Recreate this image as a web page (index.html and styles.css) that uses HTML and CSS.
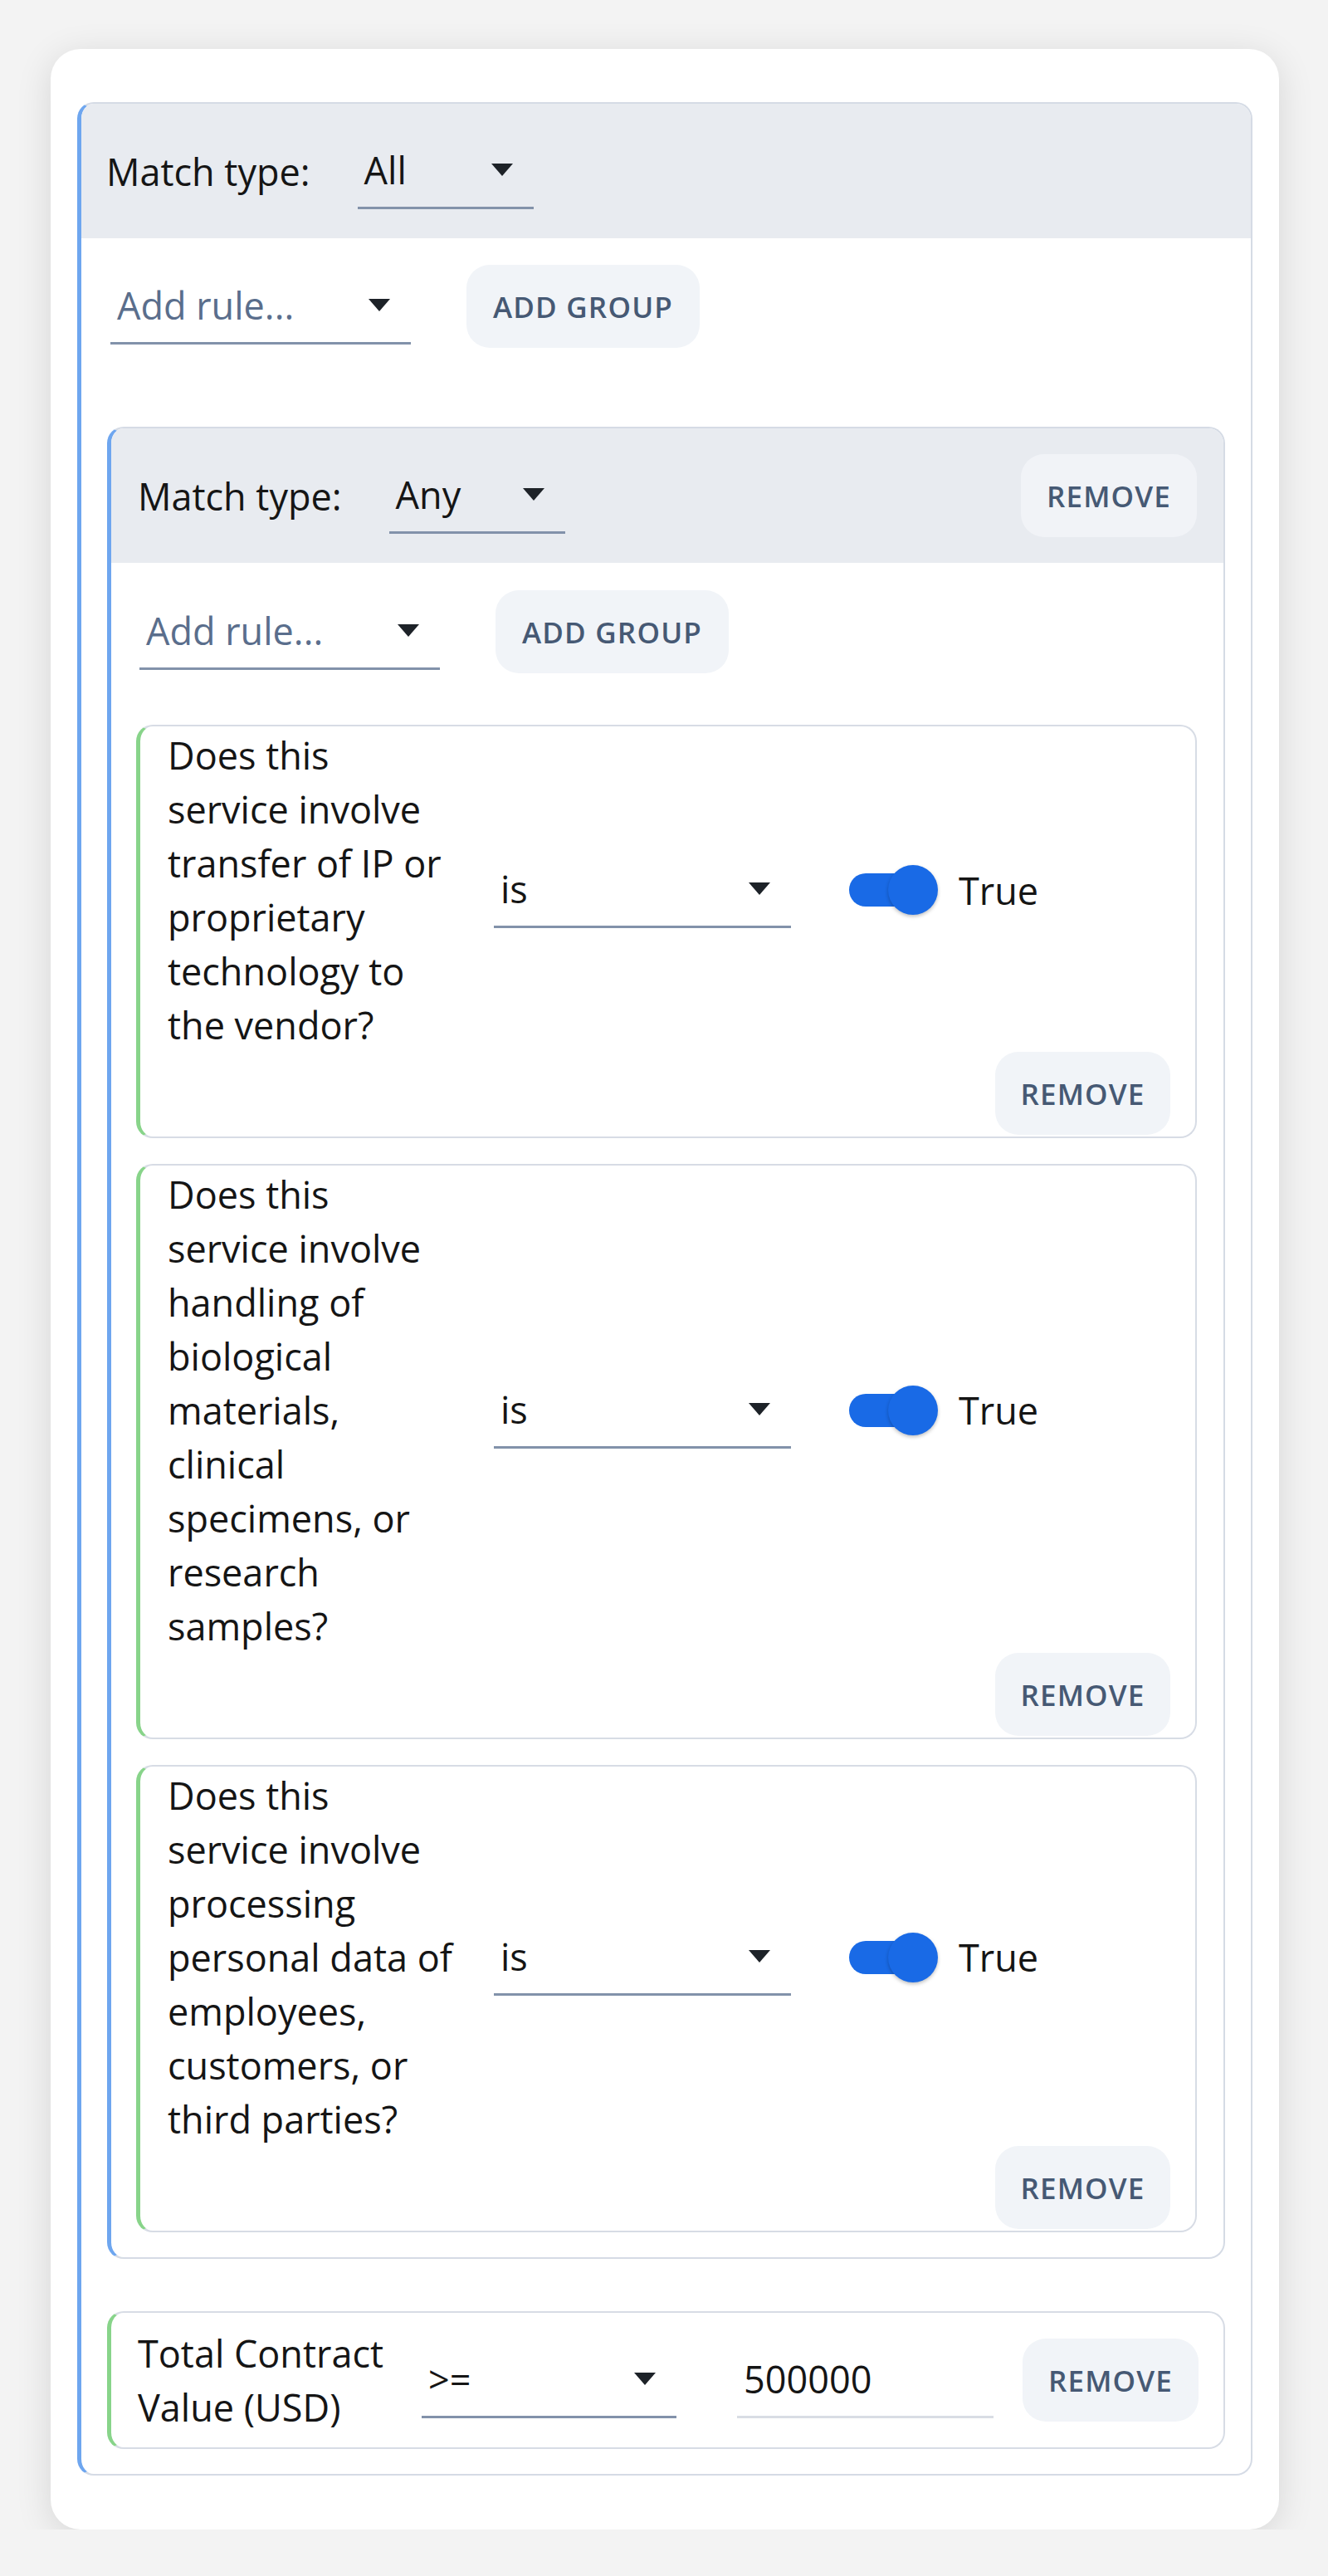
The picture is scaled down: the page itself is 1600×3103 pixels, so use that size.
FILE: index.html
```html
<!DOCTYPE html>
<html lang="en">
<head>
  <meta charset="UTF-8">
  <meta name="viewport" content="width=device-width, initial-scale=1.0">
  <title>Rule builder</title>
  <link rel="stylesheet" href="styles.css">
</head>
<body>
  <div class="card">
    <div class="group">
      <div class="group-head">
        <span class="match-label">Match type:</span>
        <div class="select select-match"><span>All</span><i class="caret"></i></div>
      </div>
      <div class="group-body">
        <div class="add-row">
          <div class="select select-add"><span class="placeholder">Add rule...</span><i class="caret"></i></div>
          <button class="btn btn-add">ADD GROUP</button>
        </div>

        <div class="group group-inner">
          <div class="group-head">
            <span class="match-label">Match type:</span>
            <div class="select select-match"><span>Any</span><i class="caret"></i></div>
            <button class="btn btn-head">REMOVE</button>
          </div>
          <div class="group-body inner-body">
            <div class="add-row">
              <div class="select select-add"><span class="placeholder">Add rule...</span><i class="caret"></i></div>
              <button class="btn btn-add">ADD GROUP</button>
            </div>

            <div class="rule first-rule">
              <div class="rule-main">
                <div class="rule-label">Does this service involve transfer of IP or proprietary technology to the vendor?</div>
                <div class="select select-op"><span>is</span><i class="caret"></i></div>
                <div class="toggle"><span class="toggle-track"></span><span class="toggle-knob"></span></div>
                <span class="toggle-text">True</span>
              </div>
              <div class="rule-foot"><button class="btn">REMOVE</button></div>
            </div>

            <div class="rule">
              <div class="rule-main">
                <div class="rule-label">Does this service involve handling of biological materials, clinical specimens, or research samples?</div>
                <div class="select select-op"><span>is</span><i class="caret"></i></div>
                <div class="toggle"><span class="toggle-track"></span><span class="toggle-knob"></span></div>
                <span class="toggle-text">True</span>
              </div>
              <div class="rule-foot"><button class="btn">REMOVE</button></div>
            </div>

            <div class="rule">
              <div class="rule-main">
                <div class="rule-label">Does this service involve processing personal data of employees, customers, or third parties?</div>
                <div class="select select-op"><span>is</span><i class="caret"></i></div>
                <div class="toggle"><span class="toggle-track"></span><span class="toggle-knob"></span></div>
                <span class="toggle-text">True</span>
              </div>
              <div class="rule-foot"><button class="btn">REMOVE</button></div>
            </div>
          </div>
        </div>

        <div class="rule rule-inline">
          <div class="rule-main">
            <div class="rule-label label-short">Total Contract Value (USD)</div>
            <div class="select select-cmp"><span>&gt;=</span><i class="caret"></i></div>
            <div class="value-input">500000</div>
            <button class="btn btn-end">REMOVE</button>
          </div>
        </div>
      </div>
    </div>
  </div>
</body>
</html>
```

FILE: styles.css
```css
body {
  margin: 0;
  background-color: #f3f3f3;
  font-family: "Open Sans", "Noto Sans", sans-serif;
  font-size: 45px;
  line-height: 65px;
  color: #151515;
}
.card {
  width: 1480px;
  margin: 59px 0 0 61px;
  padding: 64px 32px 65px 32px;
  box-sizing: border-box;
  background-color: #fff;
  border-radius: 36px;
  box-shadow: 0 8px 44px rgba(0, 0, 0, 0.12);
}
.group {
  border: 2px solid #d5dbe5;
  border-left: 5px solid #6ea6ef;
  border-radius: 20px;
  overflow: hidden;
}
.group-head {
  display: flex;
  align-items: center;
  height: 162px;
  padding: 0 32px 0 30px;
  background-color: #e8ebf0;
}
.group-inner .group-head {
  padding-left: 32px;
}
.group-body {
  padding: 32px 31px 30px 31px;
}
.inner-body {
  padding: 33px 32px 30px 30px;
}
.group-inner {
  margin-top: 95px;
}
.match-label {
  white-space: nowrap;
}
.select {
  display: flex;
  align-items: center;
  box-sizing: border-box;
  height: 92px;
  padding: 12px 25px 12px 8px;
  border-bottom: 3px solid #8292aa;
}
.select-match {
  width: 212px;
  margin-left: 57px;
}
.select-add {
  width: 362px;
  margin-left: 4px;
}
.select-op {
  width: 358px;
}
.select-cmp {
  width: 307px;
}
.placeholder {
  color: #5a6e8c;
}
.caret {
  margin-left: auto;
  width: 0;
  height: 0;
  border-left: 13px solid transparent;
  border-right: 13px solid transparent;
  border-top: 15px solid #1d2228;
}
.add-row {
  display: flex;
  align-items: center;
}
.btn {
  height: 100px;
  padding: 0 22px;
  border: none;
  border-radius: 28px;
  background-color: #f1f4f8;
  color: #465974;
  font-family: "Open Sans", "Noto Sans", sans-serif;
  font-size: 35px;
  font-weight: 600;
  letter-spacing: 1.2px;
  cursor: pointer;
}
.btn-add {
  width: 281px;
  margin-left: 67px;
}
.btn-head {
  width: 212px;
  margin-left: auto;
  background-color: #f1f3f7;
}
.rule {
  margin-top: 31px;
  border: 2px solid #d7dce5;
  border-left: 5px solid #88d48a;
  border-radius: 20px;
  padding: 2px 30px 2px 33px;
}
.first-rule {
  margin-top: 62px;
}
.rule-main {
  display: flex;
  align-items: center;
}
.rule-label {
  flex: 0 0 348px;
  margin-right: 45px;
}
.toggle {
  position: relative;
  flex: 0 0 107px;
  height: 60px;
  margin-left: 70px;
}
.toggle-track {
  position: absolute;
  left: 0;
  top: 10px;
  width: 88px;
  height: 40px;
  border-radius: 20px;
  background-color: #196ae6;
}
.toggle-knob {
  position: absolute;
  right: 0;
  top: 0;
  width: 60px;
  height: 60px;
  border-radius: 50%;
  background-color: #196ae6;
  box-shadow: 0 2px 4px rgba(0, 0, 0, 0.25);
}
.toggle-text {
  margin-left: 25px;
}
.rule-foot {
  display: flex;
  justify-content: flex-end;
}
.rule-foot .btn {
  width: 211px;
}
.rule-inline {
  margin-top: 63px;
  padding: 16px 30px 16px 32px;
}
.label-short {
  flex: 0 0 314px;
  margin-right: 28px;
}
.value-input {
  box-sizing: border-box;
  width: 309px;
  height: 92px;
  margin-left: 73px;
  padding: 12px 8px;
  border-bottom: 3px solid #d9dde4;
}
.btn-end {
  width: 212px;
  margin-left: auto;
}
```
